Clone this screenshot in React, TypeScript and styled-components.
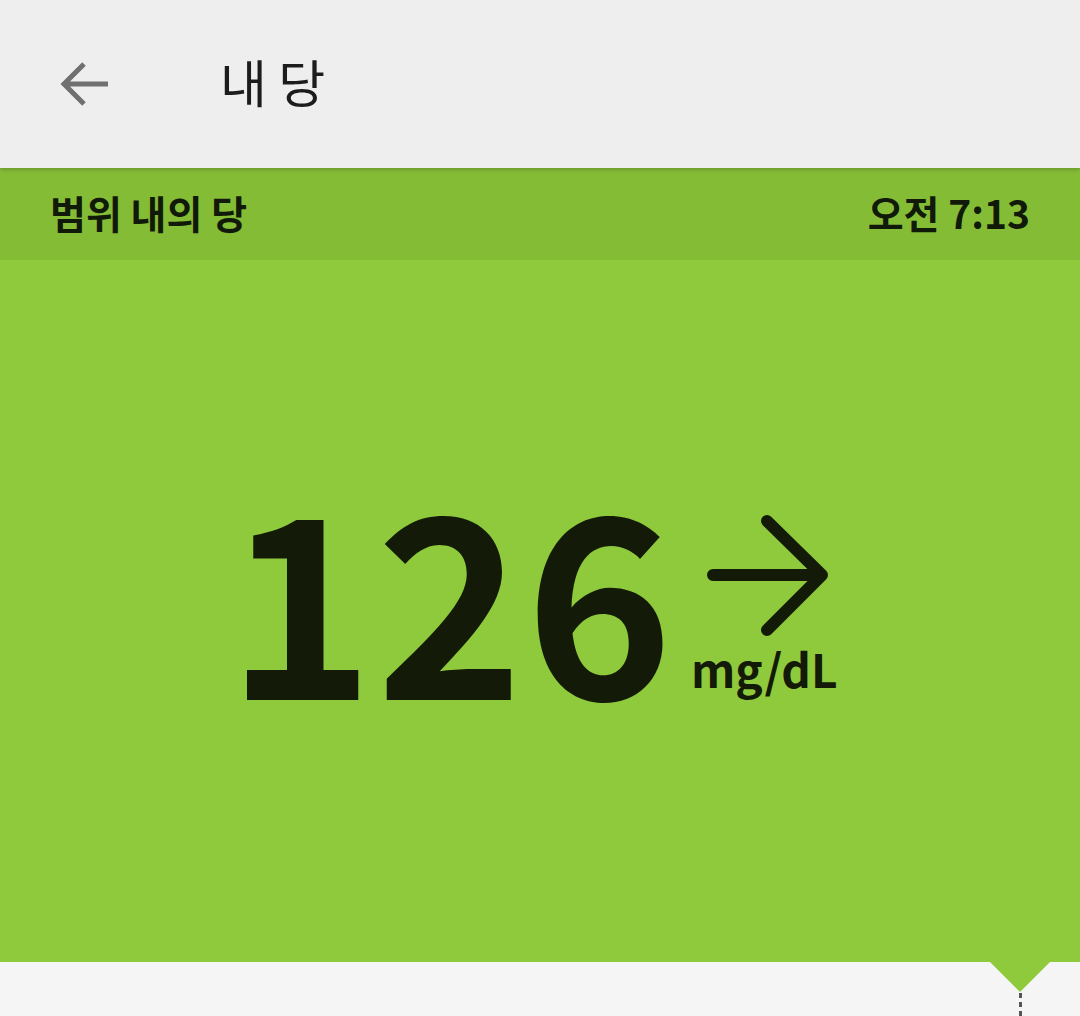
import React from 'react'
import styled, { createGlobalStyle } from 'styled-components'

const GlobalStyle = createGlobalStyle`
    html, body {
        margin: 0;
        padding: 0;
        background-color: #f5f5f5;
    }
    body {
        font-family: 'Noto Sans CJK KR', 'Noto Sans', sans-serif;
    }
`

const PageStyled = styled.div`
    width: 1080px;
    height: 1016px;
    display: flex;
    flex-direction: column;
    overflow: hidden;
`
const AppBarStyled = styled.header`
    height: 168px;
    flex-shrink: 0;
    display: flex;
    align-items: center;
    padding-left: 58px;
    box-sizing: border-box;
    background-color: #eeeeee;
    position: relative;
    z-index: 1;
    box-shadow: 0 2px 4px rgba(0, 0, 0, 0.18);
`
const BackButtonStyled = styled.button`
    width: 52px;
    height: 52px;
    padding: 0;
    border: none;
    background: none;
    display: flex;
    align-items: center;
    justify-content: center;
    margin-right: 110px;
`
const AppBarTitleStyled = styled.h1`
    margin: 0;
    font-family: 'Noto Sans CJK KR', sans-serif;
    font-weight: 400;
    font-size: 51px;
    color: #1c1c1c;
    line-height: 1;
    margin-top: -6px;
`
const StatusStripStyled = styled.div`
    height: 92px;
    flex-shrink: 0;
    display: flex;
    align-items: center;
    justify-content: space-between;
    padding: 0 50px;
    box-sizing: border-box;
    background-color: #84bc36;
    font-family: 'Noto Sans CJK KR', sans-serif;
    font-weight: 700;
    font-size: 39px;
    color: #111a08;
`
const StripTextStyled = styled.span`
    line-height: 1;
    margin-top: -4px;
`
const ReadingPanelStyled = styled.section`
    height: 702px;
    flex-shrink: 0;
    display: flex;
    align-items: flex-start;
    justify-content: center;
    padding-top: 231px;
    box-sizing: border-box;
    background-color: #8fca3c;
    color: #131a08;
`
const ReadingGroupStyled = styled.div`
    display: flex;
    align-items: flex-end;
    margin-right: 16px;
`
const ValueStyled = styled.span`
    font-family: 'Noto Sans CJK KR', sans-serif;
    font-weight: 700;
    font-size: 250px;
    line-height: 200px;
    letter-spacing: 2px;
`
const TrendColumnStyled = styled.div`
    display: flex;
    flex-direction: column;
    align-items: flex-start;
    margin-left: 32px;
`
const UnitStyled = styled.span`
    font-family: 'Noto Sans CJK KR', sans-serif;
    font-weight: 700;
    font-size: 46px;
    line-height: 1;
    margin-top: 6px;
    margin-left: -16px;
`
const GraphAreaStyled = styled.section`
    flex: 1;
    position: relative;
    background-color: #f5f5f5;
`
const PointerStyled = styled.div`
    position: absolute;
    top: 0;
    left: ${(p: { x: number }) => p.x - 30}px;
    width: 0;
    height: 0;
    border-left: 30px solid transparent;
    border-right: 30px solid transparent;
    border-top: 30px solid #8fca3c;
`
const MarkerLineStyled = styled.div`
    position: absolute;
    top: 31px;
    bottom: 0;
    left: ${(p: { x: number }) => p.x - 1.5}px;
    width: 3px;
    background-image: repeating-linear-gradient(to bottom, #555555 0 5px, transparent 5px 9px);
`

const BackArrow = () => (
    <svg width="52" height="52" viewBox="0 0 52 52">
        <path
            d="M50 26H8M26 6L6 26l20 20"
            fill="none"
            stroke="#707070"
            strokeWidth="5"
            strokeLinecap="butt"
        />
    </svg>
)

const TrendArrow = () => (
    <svg width="124" height="124" viewBox="0 0 124 124">
        <path
            d="M6 60H114M60 6l55 54-55 55"
            fill="none"
            stroke="#131a08"
            strokeWidth="12"
            strokeLinecap="round"
            strokeLinejoin="round"
        />
    </svg>
)

const App = () => {
    const reading = { value: 126, unit: 'mg/dL', time: '오전 7:13', status: '범위 내의 당' }

    return (
        <PageStyled>
            <GlobalStyle />
            <AppBarStyled>
                <BackButtonStyled aria-label="back">
                    <BackArrow />
                </BackButtonStyled>
                <AppBarTitleStyled>내 당</AppBarTitleStyled>
            </AppBarStyled>

            <StatusStripStyled>
                <StripTextStyled>{reading.status}</StripTextStyled>
                <StripTextStyled>{reading.time}</StripTextStyled>
            </StatusStripStyled>

            <ReadingPanelStyled>
                <ReadingGroupStyled>
                    <ValueStyled>{reading.value}</ValueStyled>
                    <TrendColumnStyled>
                        <TrendArrow />
                        <UnitStyled>{reading.unit}</UnitStyled>
                    </TrendColumnStyled>
                </ReadingGroupStyled>
            </ReadingPanelStyled>

            <GraphAreaStyled>
                <PointerStyled x={1020} />
                <MarkerLineStyled x={1020} />
            </GraphAreaStyled>
        </PageStyled>
    )
}

export default App
